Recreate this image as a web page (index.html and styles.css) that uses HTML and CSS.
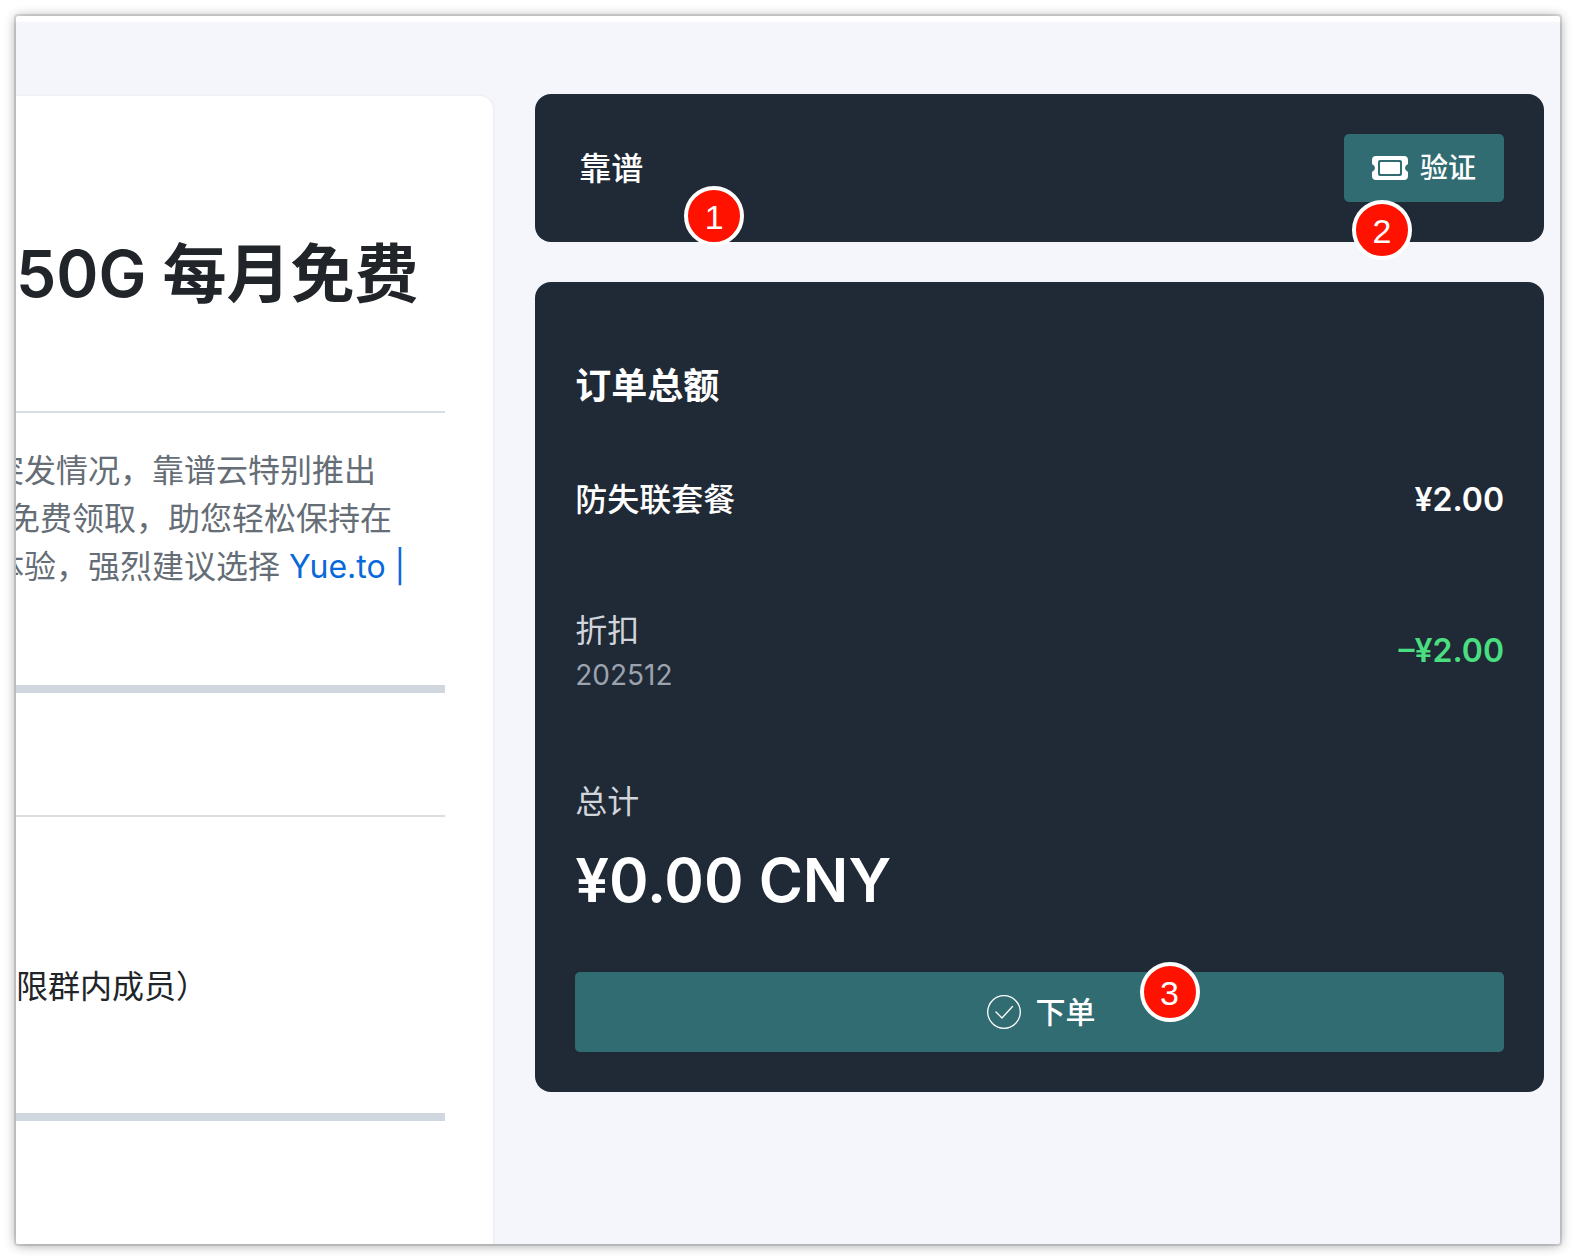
FILE: index.html
```html
<!DOCTYPE html>
<html lang="zh-CN">
<head>
    <meta charset="UTF-8">
    <meta name="viewport" content="width=device-width, initial-scale=1.0">
    <title>订单总额</title>
    <link rel="stylesheet" href="styles.css">
</head>
<body>
    <div class="window">
        <main class="checkout">
            <article class="product">
                <h1>50G 每月免费</h1>
                <hr class="thin">
                <p class="description">
                    <span class="line">突发情况，靠谱云特别推出</span>
                    <span class="line indent">免费领取，助您轻松保持在</span>
                    <span class="line">体验，强烈建议选择 <a href="#">Yue.to |</a></span>
                </p>
                <hr class="thick">
                <hr class="thin second">
                <p class="note">限群内成员）</p>
                <hr class="thick">
            </article>

            <aside class="sidebar">
                <form class="card coupon">
                    <input class="coupon-input" type="text" value="靠谱" aria-label="优惠码">
                    <button class="btn coupon-btn" type="button">
                        <svg width="36" height="24" viewBox="0 0 36 24" aria-hidden="true">
                            <path fill="#fff" fill-rule="evenodd" d="M4 0h28a4 4 0 0 1 4 4v4q-3 1.500-3 4t3 4v4a4 4 0 0 1-4 4H4a4 4 0 0 1-4-4v-4q3-1.500 3-4t-3-4V4a4 4 0 0 1 4-4zM8 4a2 2 0 0 0-2 2v12a2 2 0 0 0 2 2h20a2 2 0 0 0 2-2V6a2 2 0 0 0-2-2z"/>
                            <rect x="8" y="6" width="20" height="12" rx="1" fill="#fff"/>
                        </svg>
                        验证
                    </button>
                    <span class="step step-1">1</span>
                    <span class="step step-2">2</span>
                </form>

                <section class="card order">
                    <h2>订单总额</h2>
                    <div class="row">
                        <span class="item">防失联套餐</span>
                        <span class="price">¥2.00</span>
                    </div>
                    <div class="row">
                        <div>
                            <div class="label">折扣</div>
                            <div class="code">202512</div>
                        </div>
                        <span class="price discount">–¥2.00</span>
                    </div>
                    <div class="label">总计</div>
                    <div class="total">¥0.00 CNY</div>
                    <div class="submit">
                        <button class="btn submit-btn" type="button">
                            <svg width="40" height="40" viewBox="0 0 40 40" fill="none" stroke="#fff" stroke-linecap="round" stroke-linejoin="round" aria-hidden="true">
                                <circle cx="20" cy="20" r="16.3" stroke-width="1.300"/>
                                <path d="M12 20l6 6L28.500 14.500" stroke-width="1.300"/>
                            </svg>
                            下单
                        </button>
                        <span class="step step-3">3</span>
                    </div>
                </section>
            </aside>
        </main>
    </div>
</body>
</html>
```
FILE: styles.css
```css
* {
    box-sizing: border-box;
}

body {
    margin: 0;
    padding: 16px;
    height: 100vh;
    background: #fff;
    font-family: Inter, "Noto Sans CJK SC", sans-serif;
    font-size: 32px;
    line-height: 48px;
    color: #212529;
}

.window {
    height: 100%;
    overflow: hidden;
    background: #f4f6fb;
    border-top: 6px solid #fff;
    border-radius: 2px;
    box-shadow: 0 0 0 2px rgba(0,0,0,0.1), 0 1px 12px rgba(0,0,0,0.4);
}

.checkout {
    display: grid;
    grid-template-columns: 19fr 40fr;
    gap: 40px;
    height: 100%;
    padding: 72px 16px 0 0;
}

.product {
    background: #fff;
    border: 2px solid #f0f0f6;
    border-width: 2px 2px 0 0;
    border-top-right-radius: 16px;
    padding: 136px 48px 0 0;
    white-space: nowrap;
}

h1 {
    margin: 0 0 96px;
    font-size: 64px;
    line-height: 83px;
    font-weight: 600;
}

hr {
    margin: 0;
    border: 0;
}

.thin {
    height: 2px;
    background: #d9dee3;
}

.thick {
    height: 8px;
    background: #d0d7df;
}

.description {
    margin: 34px 0 94px -24px;
    color: #656d76;
}

.line {
    display: block;
}

.indent {
    padding-left: 16px;
}

a {
    color: #0969da;
    text-decoration: none;
}

.second {
    margin-top: 122px;
}

.note {
    margin: 146px 0 102px;
}

.sidebar {
    display: flex;
    flex-direction: column;
    gap: 40px;
}

.card {
    position: relative;
    padding: 40px;
    background: #1f2a36;
    border-radius: 16px;
    color: #fff;
}

.coupon {
    display: flex;
    align-items: center;
    gap: 20px;
}

.coupon-input {
    flex: 1;
    min-width: 0;
    padding: 2px 4px 0;
    border: 0;
    background: none;
    color: #fff;
    font: inherit;
    font-weight: 500;
}

.btn {
    display: flex;
    align-items: center;
    justify-content: center;
    gap: 12px;
    border: 0;
    border-radius: 5px;
    background: #316c72;
    color: #fff;
    font-family: inherit;
    font-weight: 500;
    line-height: 40px;
    cursor: pointer;
}

.coupon-btn {
    height: 68px;
    padding: 0 28px;
    font-size: 28px;
}

.order h2 {
    margin: 36px 0 62px;
    font-size: 36px;
    line-height: 56px;
    font-weight: 700;
}

.row {
    display: flex;
    justify-content: space-between;
    align-items: center;
    margin-bottom: 83px;
}

.item {
    font-weight: 500;
}

.price {
    font-weight: 600;
}

.discount {
    color: #4ade80;
}

.label {
    color: #d1d5db;
}

.code {
    font-size: 28px;
    line-height: 40px;
    color: #9ca3af;
}

.total {
    margin: 18px 0 56px;
    font-size: 60px;
    line-height: 72px;
    font-weight: 600;
}

.submit {
    position: relative;
}

.submit-btn {
    width: 100%;
    height: 80px;
    font-size: 30px;
}

/* numbered step markers */
.step {
    position: absolute;
    width: 60px;
    height: 60px;
    border: 4px solid #fff;
    border-radius: 50%;
    background: #ff1200;
    color: #fff;
    font-family: "Liberation Sans", sans-serif;
    font-size: 34px;
    line-height: 54px;
    text-align: center;
}

.step-1 {
    top: 92px;
    left: 149px;
}

.step-2 {
    top: 106px;
    right: 132px;
}

.step-3 {
    top: -10px;
    left: calc(50% + 100px);
}
```
